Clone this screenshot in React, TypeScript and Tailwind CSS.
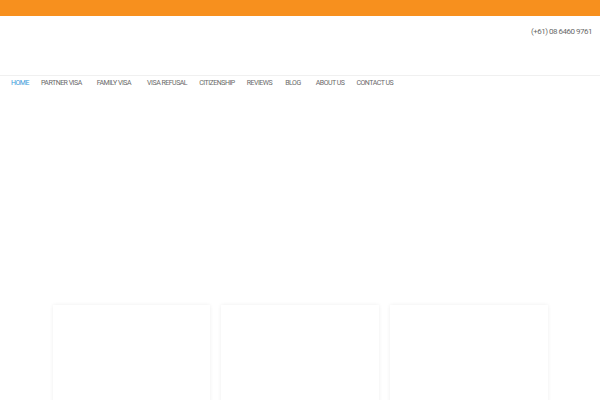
export default function App() {
  const nav = [
    { label: "HOME", ml: "ml-0", active: true },
    { label: "PARTNER VISA", ml: "ml-[12px]" },
    { label: "FAMILY VISA", ml: "ml-[15px]" },
    { label: "VISA REFUSAL", ml: "ml-[16px]" },
    { label: "CITIZENSHIP", ml: "ml-[12px]" },
    { label: "REVIEWS", ml: "ml-[12px]" },
    { label: "BLOG", ml: "ml-[13px]" },
    { label: "ABOUT US", ml: "ml-[15px]" },
    { label: "CONTACT US", ml: "ml-[12px]" },
  ]

  return (
    <div className="h-[400px] w-[600px] overflow-hidden bg-white font-['Roboto',sans-serif]">
      <div className="h-[16px] bg-[#f7901e]"></div>
      <div className="flex h-[59px] justify-end pr-[8px] pt-[11px]">
        <span className="text-[8px] leading-[10px] tracking-[-0.5px] text-[#6a6a6a]">(+61) 08 6460 9761</span>
      </div>
      <nav className="flex h-[14px] items-center border-t border-[#f0f0f0] pl-[11px] pt-[1px]">
        {nav.map((item) => (
          <a
            key={item.label}
            className={`${item.ml} text-[7px] leading-[8px] tracking-[-0.5px] ${item.active ? "text-[#3a9ad9]" : "text-[#6a6a6a]"}`}
          >
            {item.label}
          </a>
        ))}
      </nav>
      <div className="h-[216px]"></div>
      <div className="mx-auto grid w-[495px] grid-cols-3 gap-[11px]">
        <div className="h-[120px] bg-white shadow-[0_0_4px_rgba(0,0,0,0.07)]"></div>
        <div className="h-[120px] bg-white shadow-[0_0_4px_rgba(0,0,0,0.07)]"></div>
        <div className="h-[120px] bg-white shadow-[0_0_4px_rgba(0,0,0,0.07)]"></div>
      </div>
    </div>
  )
}
